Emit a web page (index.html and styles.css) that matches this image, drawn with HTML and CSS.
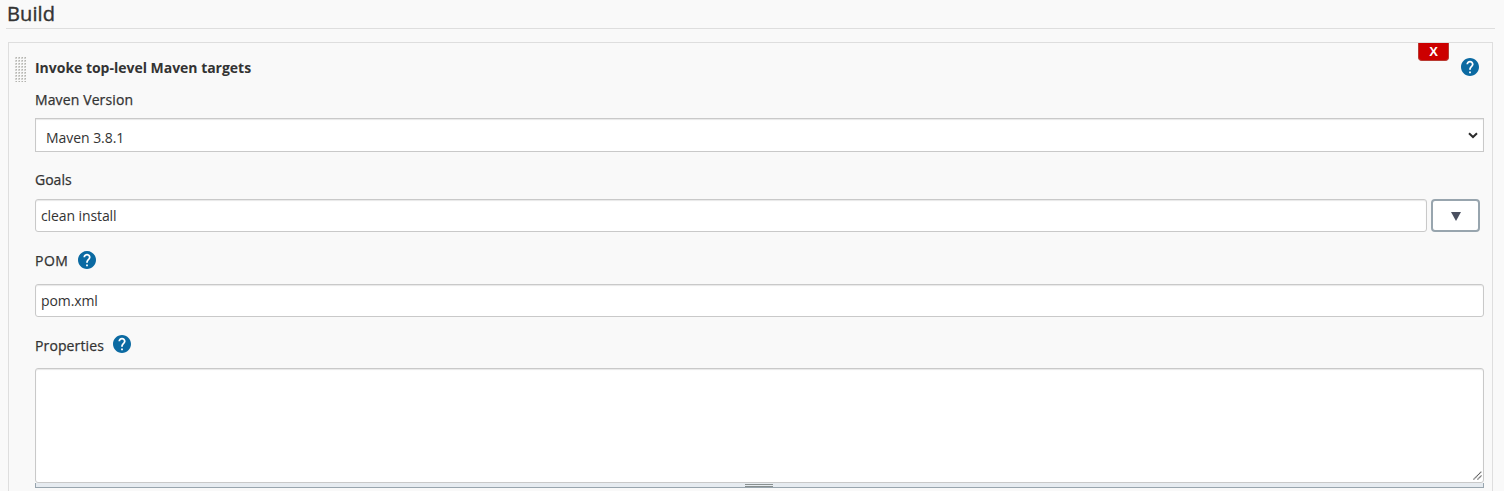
FILE: index.html
```html
<!DOCTYPE html>
<html lang="en">
<head>
<meta charset="utf-8">
<title>Build</title>
<link rel="stylesheet" href="styles.css">
</head>
<body>
<svg class="defs" width="0" height="0">
  <symbol id="help" viewBox="2 2 20 20"><circle cx="12" cy="12" r="9" fill="#fff"/><path fill="#0b6aa2" d="M12 2C6.480 2 2 6.480 2 12s4.480 10 10 10 10-4.480 10-10S17.520 2 12 2zm1 17h-2v-2h2v2zm2.070-7.750l-.9.92C13.450 12.900 13 13.500 13 15h-2v-.5c0-1.100.45-2.100 1.170-2.830l1.240-1.260c.37-.36.59-.86.59-1.410 0-1.100-.9-2-2-2s-2 .9-2 2H8c0-2.210 1.790-4 4-4s4 1.790 4 4c0 .88-.36 1.680-.93 2.250z"/></symbol>
</svg>
<main class="page">
  <h1 class="heading"><span class="t-build">Build</span></h1>
  <section class="panel">
    <header class="title-row">
      <svg class="grip" width="12" height="25"><defs><pattern id="dots" width="3" height="3" patternUnits="userSpaceOnUse"><rect width="2" height="2" fill="#d4d4d1"/><rect width="1" height="1" x="1" fill="#b4b4b0"/></pattern></defs><rect width="12" height="25" fill="url(#dots)"/></svg>
      <strong class="title">Invoke top-level Maven targets</strong>
      <button class="delete">X</button>
      <svg class="help title-help"><use href="#help"/></svg>
    </header>
    <div class="fields">
      <div class="label l-version"><span class="t-version">Maven Version</span></div>
      <div class="control select"><span class="t-select">Maven 3.8.1</span>
        <svg width="10" height="7" viewBox="0 0 10 7"><path d="M1 1.2 5 5l4-3.8" fill="none" stroke="#2b2b2b" stroke-width="2"/></svg>
      </div>
      <div class="label l-goals"><span class="t-goals">Goals</span></div>
      <div class="goal-row">
        <div class="control input"><span class="t-clean">clean install</span></div>
        <button class="expand"><svg width="10" height="9"><path d="M0 0h10L5 9z" fill="#4a5060"/></svg></button>
      </div>
      <div class="label l-pom"><span class="t-pom">POM</span><svg class="help"><use href="#help"/></svg></div>
      <div class="control input"><span class="t-xml">pom.xml</span></div>
      <div class="label l-props"><span class="t-props">Properties</span><svg class="help"><use href="#help"/></svg></div>
      <div class="control area"><svg width="9" height="9"><path d="M.5 8.5l8-8M4.500 8.500l4-4" stroke="#555" stroke-width="1.100" stroke-dasharray="1.300 .3"/></svg></div>
      <div class="resize"><i class="bars"></i></div>
    </div>
  </section>
</main>
</body>
</html>
```
FILE: styles.css
```css
* { box-sizing: border-box; }
body { margin: 0; height: 491px; overflow: hidden; background: #f9f9f9; color: #333; font: 14px/20px "Open Sans", "Noto Sans", sans-serif; }
.defs { position: absolute; }
.page { padding: 0 9px 0 6px; }
.heading { margin: 0; height: 29px; padding-left: 1px; border-bottom: 1px solid #dedede; font-size: 20px; font-weight: 500; line-height: 27px; -webkit-text-stroke: .4px #333; letter-spacing: .1px; }
.panel { margin: 13px 2px 0; height: 470px; border: 1px solid #dedede; }
.title-row { display: flex; height: 46px; padding-left: 6px; }
.grip { margin: 14px 8px 0 0; flex: none; }
.title { margin-top: 15px; flex: 1; white-space: nowrap; font-weight: 700; letter-spacing: -.02px; }
.delete { width: 31px; height: 18px; padding: 0; border: 1px solid #b93a32; border-top: 0; border-radius: 0 0 4px 4px; background: #c00; color: #fff; font: 700 13px/18px "Liberation Sans", sans-serif; }
.help { display: block; width: 18px; height: 18px; flex: none; }
.title-help { margin: 14.500px 13.500px 0 11.500px; }
.fields { padding: 0 8px 0 26px; }
.label { display: flex; font-weight: 500; -webkit-text-stroke: .25px #333; letter-spacing: .12px; }
.label .help { margin: -.5px 0 0 9.500px; -webkit-text-stroke: 0; }
.t-pom { letter-spacing: .5px; }
.l-version { height: 29px; padding-top: 1px; }
.l-goals { height: 47px; padding-top: 18px; letter-spacing: 0; }
.l-pom { height: 52px; padding-top: 19px; }
.l-props { height: 51px; padding-top: 19px; }
.l-props .help { margin-top: -1px; }
.control { border: 1px solid #c9c9c9; background: #fff; box-shadow: inset 0 1px 1px #e8e8e8; }
.select { display: flex; align-items: center; justify-content: space-between; height: 34px; padding: 0 5px 0 10px; }
.select span { padding-top: 5px; letter-spacing: -.05px; }
.input { height: 33px; padding: 6px 5px; border-radius: 3px; letter-spacing: -.1px; }
.goal-row { display: flex; gap: 4px; padding-right: 4px; }
.goal-row .input { flex: 1; }
.expand { display: flex; align-items: center; justify-content: center; width: 49px; height: 33px; padding: 2px 0 0; border: 2px solid #98a5ae; border-radius: 4px; background: #fff; }
.area { display: flex; align-items: flex-end; justify-content: flex-end; height: 115px; padding: 2px 1px 2px 2px; border-radius: 3px; }
.resize { display: flex; justify-content: center; height: 5px; padding: 1px 1px 0 0; background: #e6ebf0; border: solid #98a5ae; border-width: 0 1px 1px; }
.bars { width: 28px; height: 3px; border: solid #888f8f; border-width: 1px 0; }
```
